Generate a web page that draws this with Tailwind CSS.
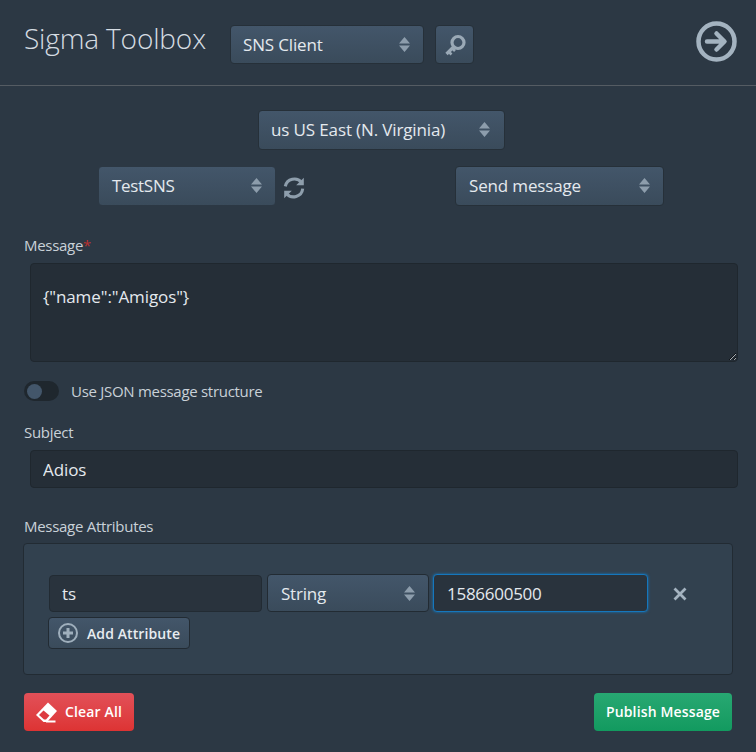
<!DOCTYPE html>
<html lang="en">
<head>
  <meta charset="UTF-8" />
  <title>Sigma Toolbox</title>
  <script src="https://cdn.jsdelivr.net/npm/@tailwindcss/browser@4"></script>
</head>
<body class="bg-[#2c3844] font-['Open_Sans','Noto_Sans',sans-serif] text-[17px] text-[#e4e9ee] overflow-hidden">
<div class="w-[756px] h-[752px]">

  <!-- Header -->
  <header class="h-[86px] border-b border-[#555c63] pl-[24px] pr-[19px] pt-[25px] flex items-start">
    <h1 class="w-[206px] h-[30px] -mt-px text-[28px] leading-[28px] font-light tracking-[-0.15px] text-[#d5dce2] whitespace-nowrap">Sigma Toolbox</h1>
    <div class="relative w-[194px] h-[39px] rounded border border-[#263039] bg-gradient-to-b from-[#43566a] to-[#3a4b5b] flex items-center pl-[12px] tracking-[-0.15px]">
      SNS Client
      <svg class="absolute right-[13px] top-[11px]" width="11" height="15" viewBox="0 0 11 15" fill="#8d9dac"><path d="M5.500 0 11 6.500H0zM0 8.500h11L5.500 15z"/></svg>
    </div>
    <button class="ml-[11px] w-[39px] h-[39px] rounded border border-[#263039] bg-gradient-to-b from-[#43566a] to-[#3a4b5b] flex items-center justify-center">
      <svg width="22" height="22" viewBox="0 0 22 22" fill="none" stroke="#9aa9b6" stroke-width="3.200"><circle cx="14" cy="8.500" r="6"/><path d="M10 12.500 2.500 20"/><path d="M4.500 17.500l3 3M8 14l3 3" stroke-width="2.600"/></svg>
    </button>
    <svg class="ml-auto -mt-[4px]" width="41" height="41" viewBox="0 0 41 41" fill="none" stroke="#a4b3c0"><circle cx="20.500" cy="20.500" r="18" stroke-width="4.500"/><path d="M11 20.500h17M20.500 12.500l8 8-8 8" stroke-width="4.500" stroke-linecap="round" stroke-linejoin="round"/></svg>
  </header>

  <!-- Region -->
  <div class="flex justify-center mt-[24px]">
    <div class="relative w-[247px] h-[40px] ml-[7px] rounded border border-[#263039] bg-gradient-to-b from-[#43566a] to-[#3a4b5b] flex items-center pl-[12px] tracking-[-0.13px]">
      us US East (N. Virginia)
      <svg class="absolute right-[14px] top-[11px]" width="11" height="15" viewBox="0 0 11 15" fill="#8d9dac"><path d="M5.500 0 11 6.500H0zM0 8.500h11L5.500 15z"/></svg>
    </div>
  </div>

  <!-- Topic and action -->
  <div class="flex items-start mt-[16px] pl-[98px]">
    <div class="relative w-[178px] h-[40px] rounded border border-[#2c3844] bg-gradient-to-b from-[#43566a] to-[#3a4b5b] flex items-center pl-[13px] tracking-[-0.3px]">
      TestSNS
      <svg class="absolute right-[13px] top-[11px]" width="11" height="15" viewBox="0 0 11 15" fill="#8d9dac"><path d="M5.500 0 11 6.500H0zM0 8.500h11L5.500 15z"/></svg>
    </div>
    <svg class="ml-[6px] mt-[10px]" width="24" height="24" viewBox="0 0 22 22" fill="none" stroke="#8e9eac" stroke-width="2.800"><path d="M3 9.500A8.500 8.500 0 0 1 18 6"/><path d="M19 11.500A8.500 8.500 0 0 1 4 16"/><path d="M20 1.500v7h-7z" fill="#8e9eac" stroke="none"/><path d="M2 20.500v-7h7z" fill="#8e9eac" stroke="none"/></svg>
    <div class="relative ml-[149px] w-[209px] h-[40px] rounded border border-[#263039] bg-gradient-to-b from-[#43566a] to-[#3a4b5b] flex items-center pl-[13px] tracking-[-0.15px]">
      Send message
      <svg class="absolute right-[13px] top-[11px]" width="11" height="15" viewBox="0 0 11 15" fill="#8d9dac"><path d="M5.500 0 11 6.500H0zM0 8.500h11L5.500 15z"/></svg>
    </div>
  </div>

  <!-- Message -->
  <div class="pl-[24px] mt-[29px] text-[15px] leading-[20px] text-[#c9d1d8] tracking-[-0.29px]">Message<span class="text-[#b8312f]">*</span></div>
  <textarea class="block ml-[30px] mt-[8px] w-[708px] h-[99px] rounded border border-[#1f272e] bg-[#252e37] px-[12px] py-[21px] text-[17px] leading-[24px] text-[#e4e9ee] tracking-[-0.1px] outline-none">{"name":"Amigos"}</textarea>

  <!-- Toggle -->
  <div class="flex items-center pl-[24px] mt-[19px] h-[20px]">
    <div class="w-[35px] h-[20px] rounded-full bg-[#1f272e] flex items-center pl-[3px]">
      <div class="w-[15px] h-[15px] rounded-full bg-[#43566a]"></div>
    </div>
    <span class="ml-[12px] text-[15px] text-[#c9d1d8] tracking-[-0.29px]">Use JSON message structure</span>
  </div>

  <!-- Subject -->
  <div class="pl-[24px] mt-[21px] text-[15px] leading-[20px] text-[#c9d1d8] tracking-[-0.29px]">Subject</div>
  <input class="block ml-[30px] mt-[8px] w-[708px] h-[38px] rounded border border-[#1f272e] bg-[#252e37] px-[12px] text-[#e4e9ee] outline-none tracking-[-0.1px]" value="Adios" />

  <!-- Attributes -->
  <div class="pl-[24px] mt-[28px] text-[15px] leading-[20px] text-[#c9d1d8] tracking-[-0.29px]">Message Attributes</div>
  <section class="ml-[23px] mt-[7px] w-[710px] h-[132px] rounded border border-[#222b33] bg-[#32414f] pl-[25px] pt-[30px]">
    <div class="flex items-center h-[38px]">
      <input class="w-[213px] h-[37px] rounded border border-[#222b33] bg-[#29333d] px-[12px] text-[#e4e9ee] outline-none" value="ts" />
      <div class="relative ml-[5px] w-[162px] h-[38px] rounded border border-[#222b33] bg-gradient-to-b from-[#43566a] to-[#3a4b5b] flex items-center pl-[13px] pt-[1px] tracking-[-0.2px]">
        String
        <svg class="absolute right-[13px] top-[11px]" width="11" height="15" viewBox="0 0 11 15" fill="#8d9dac"><path d="M5.500 0 11 6.500H0zM0 8.500h11L5.500 15z"/></svg>
      </div>
      <input class="ml-[4px] w-[215px] h-[38px] rounded border-[1.5px] border-[#1577bd] shadow-[0_0_3px_#1577bd] bg-[#29333d] px-[13px] text-[#e4e9ee] outline-none tracking-[-0.27px]" value="1586600500" />
      <svg class="ml-[25px] mt-[2px]" width="14" height="14" viewBox="0 0 14 14" stroke="#a4b3c0" stroke-width="2.800"><path d="M1.500 1.500l11 11M12.500 1.500l-11 11"/></svg>
    </div>
    <button class="flex items-center mt-[5px] -ml-[1px] w-[142px] h-[32px] rounded border border-[#222b33] bg-gradient-to-b from-[#43566a] to-[#3a4b5b] pl-[9px] text-[14px] font-semibold tracking-[0.1px] text-[#e8ecf0]">
      <svg width="20" height="20" viewBox="0 0 20 20" fill="none" stroke="#9fafbc"><circle cx="10" cy="10" r="9" stroke-width="2"/><path d="M10 5v10M5 10h10" stroke-width="3"/></svg>
      <span class="ml-[9px]">Add Attribute</span>
    </button>
  </section>

  <!-- Actions -->
  <div class="flex justify-between items-start mt-[18px] pl-[24px] pr-[24px]">
    <button class="flex items-center w-[110px] h-[38px] rounded bg-gradient-to-b from-[#e25058] to-[#dd3333] pl-[12px] text-[14px] font-semibold tracking-[0.15px] text-[#fff]">
      <svg width="21" height="21" viewBox="0 0 21 21" fill="none"><path d="M12 .5 21 9 11 20H7.500L0 13z" fill="#fff"/><path d="M7.500 8.500 3 13l5 4.500h2l3.500-4z" fill="#dd3b40"/><path d="M10 19.500h9.500" stroke="#fff" stroke-width="2"/></svg>
      <span class="ml-[8px] pb-[1px]">Clear All</span>
    </button>
    <button class="w-[138px] h-[38px] pb-[2px] rounded bg-gradient-to-b from-[#27a872] to-[#129a5f] text-[14px] font-semibold tracking-[0.15px] text-[#fff]">Publish Message</button>
  </div>
</div>
</body>
</html>
